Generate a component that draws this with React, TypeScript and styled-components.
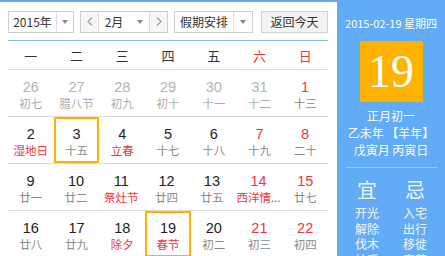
import React from "react";
import styled, { createGlobalStyle } from "styled-components";

const Global = createGlobalStyle`
  html, body { margin: 0; padding: 0; background: #fff; }
  body { font-family: "DejaVu Sans", "Noto Sans CJK SC", sans-serif; }
`;

const CJK = `"Noto Sans CJK SC", "Microsoft YaHei", sans-serif`;
const NUM = `"Liberation Sans", "Noto Sans CJK SC", sans-serif`;
const RED = "#e8383d";
const BLUE = "#62abf6";
const ORANGE = "#ffb300";

const Frame = styled.div`
  width: 445px;
  height: 256px;
  overflow: hidden;
  display: flex;
  border-top: 2px solid ${BLUE};
  box-sizing: border-box;
`;

const Left = styled.div`
  width: 337px;
  flex: none;
  padding: 0 9px 0 8px;
  box-sizing: border-box;
  background: #fff;
`;

const Toolbar = styled.div`
  display: flex;
  align-items: center;
  height: 39px;
  padding-top: 1px;
  box-sizing: border-box;
  border-bottom: 1px solid #7fb9f2;
`;

const Box = styled.div<{ $w: number; $ml?: number }>`
  display: flex;
  align-items: stretch;
  width: ${(p) => p.$w}px;
  margin-left: ${(p) => p.$ml ?? 0}px;
  height: 22px;
  box-sizing: border-box;
  border: 1px solid #cfcfcf;
  font-family: ${CJK};
  font-size: 12px;
  color: #333;
  background: #fff;
`;

const Field = styled.div<{ $w: number }>`
  width: ${(p) => p.$w}px;
  display: flex;
  align-items: center;
  justify-content: center;
  line-height: 1;
`;

const ArrowCell = styled.div<{ $bg?: boolean; $left?: boolean; $right?: boolean }>`
  flex: 1;
  display: flex;
  align-items: center;
  justify-content: center;
  border-left: ${(p) => (p.$left ? "1px solid #dcdcdc" : "none")};
  border-right: ${(p) => (p.$right ? "1px solid #dcdcdc" : "none")};
  background: ${(p) => (p.$bg ? "#f6f6f6" : "#fff")};
  color: #666;
`;

const Tri = styled.span`
  width: 0;
  height: 0;
  border-left: 3.5px solid transparent;
  border-right: 3.5px solid transparent;
  border-top: 4px solid #888;
`;

const MonthText = styled.span`
  margin-right: 14px;
`;

const Button = styled.div`
  margin-left: 8px;
  width: 67px;
  height: 22px;
  box-sizing: border-box;
  border: 1px solid #d0d0d0;
  background: #f3f3f3;
  font-family: ${CJK};
  font-size: 12px;
  color: #333;
  display: flex;
  align-items: center;
  justify-content: center;
`;

const Grid = styled.div<{ $h: number }>`
  display: grid;
  grid-template-columns: repeat(7, 1fr);
  height: ${(p) => p.$h}px;
  border-bottom: 1px solid #dcdcdc;
`;

const Week = styled.div<{ $red?: boolean }>`
  display: flex;
  align-items: center;
  justify-content: center;
  font-family: ${CJK};
  font-size: 13px;
  padding-top: 1px;
  color: ${(p) => (p.$red ? RED : "#333")};
`;

const Cell = styled.div<{ $boxed?: boolean }>`
  display: flex;
  flex-direction: column;
  align-items: center;
  box-sizing: border-box;
  border: 2px solid ${(p) => (p.$boxed ? ORANGE : "transparent")};
  padding-top: 6px;
`;

const Num = styled.div<{ $tone: string }>`
  font-family: ${NUM};
  font-size: 14.5px;
  line-height: 19px;
  color: ${(p) => p.$tone};
`;

const Lunar = styled.div<{ $tone: string }>`
  font-family: ${CJK};
  font-size: 11.5px;
  line-height: 15px;
  margin-top: -1px;
  white-space: nowrap;
  color: ${(p) => p.$tone};
`;

const Right = styled.div`
  flex: 1;
  overflow: hidden;
  background: ${BLUE};
  display: flex;
  flex-direction: column;
  align-items: center;
  color: #fff;
  font-family: ${CJK};
  & > * {
    flex-shrink: 0;
  }
`;

const DateLine = styled.div`
  margin-top: 13px;
  font-size: 11px;
  line-height: 16px;
  white-space: nowrap;
`;

const DayBox = styled.div`
  margin-top: 10px;
  width: 63px;
  height: 61px;
  background: ${ORANGE};
  border-radius: 2px;
  display: flex;
  align-items: center;
  justify-content: center;
  font-family: "Liberation Serif", serif;
  font-size: 46px;
  color: #fff;
  line-height: 1;
`;

const Info = styled.div<{ $mt: number }>`
  margin-top: ${(p) => p.$mt}px;
  font-size: 12px;
  line-height: 17px;
  height: 17px;
  white-space: nowrap;
`;

const Divider = styled.div`
  margin-top: 9px;
  width: 91px;
  height: 1px;
  background: #96c8f8;
`;

const YiJi = styled.div`
  margin-top: 9px;
  display: grid;
  grid-template-columns: 48px 48px;
  justify-items: center;
`;

const Big = styled.div`
  font-size: 20px;
  line-height: 26px;
  height: 26px;
  color: #eef6ff;
  margin-bottom: 2px;
`;

const Item = styled.div`
  font-size: 12px;
  line-height: 15.5px;
  height: 15.5px;
  color: #f4f9ff;
`;

type D = { n: number; l: string; other?: boolean; redNum?: boolean; redL?: boolean; box?: boolean };

const weeks: D[][] = [
  [
    { n: 26, l: "初七", other: true },
    { n: 27, l: "腊八节", other: true },
    { n: 28, l: "初九", other: true },
    { n: 29, l: "初十", other: true },
    { n: 30, l: "十一", other: true },
    { n: 31, l: "十二", other: true },
    { n: 1, l: "十三", redNum: true },
  ],
  [
    { n: 2, l: "湿地日", redL: true },
    { n: 3, l: "十五", box: true },
    { n: 4, l: "立春", redL: true },
    { n: 5, l: "十七" },
    { n: 6, l: "十八" },
    { n: 7, l: "十九", redNum: true },
    { n: 8, l: "二十", redNum: true },
  ],
  [
    { n: 9, l: "廿一" },
    { n: 10, l: "廿二" },
    { n: 11, l: "祭灶节", redL: true },
    { n: 12, l: "廿四" },
    { n: 13, l: "廿五" },
    { n: 14, l: "西洋情...", redNum: true, redL: true },
    { n: 15, l: "廿七", redNum: true },
  ],
  [
    { n: 16, l: "廿八" },
    { n: 17, l: "廿九" },
    { n: 18, l: "除夕", redL: true },
    { n: 19, l: "春节", redL: true, box: true },
    { n: 20, l: "初二" },
    { n: 21, l: "初三", redNum: true },
    { n: 22, l: "初四", redNum: true },
  ],
];

const weekNames = ["一", "二", "三", "四", "五", "六", "日"];
const yi = ["开光", "解除", "伐木", "纳采"];
const ji = ["入宅", "出行", "移徙", "安葬"];

export default function App() {
  return (
    <>
      <Global />
      <Frame>
        <Left>
          <Toolbar>
            <Box $w={66}>
              <Field $w={47}>2015年</Field>
              <ArrowCell $left>
                <Tri />
              </ArrowCell>
            </Box>
            <Box $w={88} $ml={6}>
              <ArrowCell $bg $right>
                <svg width="6" height="9" viewBox="0 0 6 9">
                  <path d="M5 0.5 L1 4.5 L5 8.5" fill="none" stroke="#555" strokeWidth="1" />
                </svg>
              </ArrowCell>
              <Field $w={50}>
                <MonthText>2月</MonthText>
                <Tri />
              </Field>
              <ArrowCell $bg $left>
                <svg width="6" height="9" viewBox="0 0 6 9">
                  <path d="M1 0.5 L5 4.5 L1 8.5" fill="none" stroke="#555" strokeWidth="1" />
                </svg>
              </ArrowCell>
            </Box>
            <Box $w={79} $ml={6}>
              <Field $w={58}>假期安排</Field>
              <ArrowCell $left>
                <Tri />
              </ArrowCell>
            </Box>
            <Button>返回今天</Button>
          </Toolbar>
          <Grid $h={28}>
            {weekNames.map((w, i) => (
              <Week key={w} $red={i >= 5}>
                {w}
              </Week>
            ))}
          </Grid>
          {weeks.map((wk, i) => (
            <Grid $h={46} key={i}>
              {wk.map((d) => (
                <Cell key={d.n} $boxed={d.box}>
                  <Num $tone={d.other ? "#b3b3b3" : d.redNum ? RED : "#222"}>{d.n}</Num>
                  <Lunar $tone={d.other ? "#ababab" : d.redL ? RED : "#8a8a8a"}>{d.l}</Lunar>
                </Cell>
              ))}
            </Grid>
          ))}
        </Left>
        <Right>
          <DateLine>2015-02-19 星期四</DateLine>
          <DayBox>19</DayBox>
          <Info $mt={5}>正月初一</Info>
          <Info $mt={0}>乙未年 【羊年】</Info>
          <Info $mt={0}>戊寅月 丙寅日</Info>
          <Divider />
          <YiJi>
            <Big>宜</Big>
            <Big>忌</Big>
            {yi.map((y, i) => (
              <React.Fragment key={y}>
                <Item>{y}</Item>
                <Item>{ji[i]}</Item>
              </React.Fragment>
            ))}
          </YiJi>
        </Right>
      </Frame>
    </>
  );
}
